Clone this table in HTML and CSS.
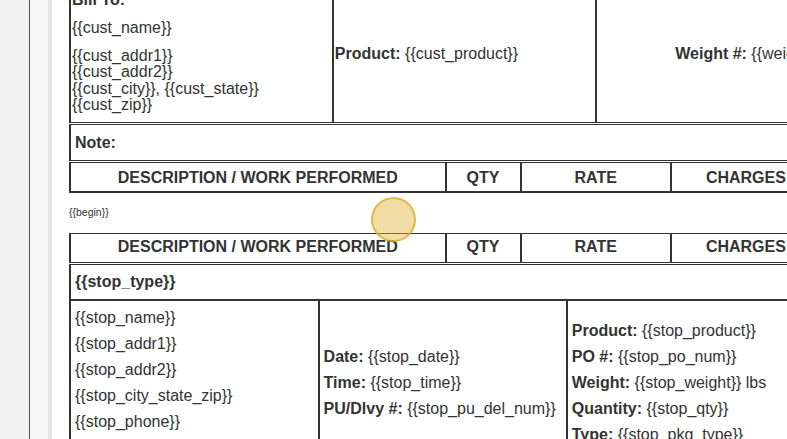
FILE: index.html
```html
<!DOCTYPE html>
<html>
<head>
<meta charset="utf-8">
<link rel="stylesheet" href="styles.css">
</head>
<body>
<div class="app">
  <div class="gutter"></div>
  <div class="rule"></div>
  <div class="margin"></div>
  <div class="edge"></div>
  <div class="page">
    <div class="sheet">
      <table class="tbl t-bill">
        <colgroup><col class="c35"><col class="c35"><col class="c30"></colgroup>
        <tr>
          <td class="bill">
            <b class="lbl-line">Bill To:</b>
            <p class="name">{{cust_name}}</p>
            <p class="addr">{{cust_addr1}}<br>{{cust_addr2}}<br>{{cust_city}}, {{cust_state}}<br>{{cust_zip}}</p>
          </td>
          <td class="mid"><b>Product:</b> {{cust_product}}</td>
          <td class="mid right"><b>Weight #:</b> {{weight}}</td>
        </tr>
      </table>
      <table class="tbl t-note">
        <tr><td class="note"><b>Note:</b></td></tr>
      </table>
      <table class="tbl t-head t-head1">
        <colgroup><col class="c50"><col class="c10"><col class="c20"><col class="c20"></colgroup>
        <tr><th>DESCRIPTION / WORK PERFORMED</th><th>QTY</th><th>RATE</th><th>CHARGES</th></tr>
      </table>
      <div class="begin">{{begin}}</div>
      <table class="tbl t-head t-head2">
        <colgroup><col class="c50"><col class="c10"><col class="c20"><col class="c20"></colgroup>
        <tr><th>DESCRIPTION / WORK PERFORMED</th><th>QTY</th><th>RATE</th><th>CHARGES</th></tr>
      </table>
      <table class="tbl t-stop">
        <colgroup><col class="s1"><col class="s2"><col class="s3"></colgroup>
        <tr><td class="stype" colspan="3"><b>{{stop_type}}</b></td></tr>
        <tr class="srow">
          <td class="scol">
            <div class="item">{{stop_name}}</div>
            <div class="item">{{stop_addr1}}</div>
            <div class="item">{{stop_addr2}}</div>
            <div class="item">{{stop_city_state_zip}}</div>
            <div class="item">{{stop_phone}}</div>
            <div class="item">{{stop_contact}}</div>
          </td>
          <td class="scol">
            <div class="item"><b>Date:</b> {{stop_date}}</div>
            <div class="item"><b>Time:</b> {{stop_time}}</div>
            <div class="item"><b>PU/Dlvy #:</b> {{stop_pu_del_num}}</div>
          </td>
          <td class="scol">
            <div class="item"><b>Product:</b> {{stop_product}}</div>
            <div class="item"><b>PO #:</b> {{stop_po_num}}</div>
            <div class="item"><b>Weight:</b> {{stop_weight}} lbs</div>
            <div class="item"><b>Quantity:</b> {{stop_qty}}</div>
            <div class="item"><b>Type:</b> {{stop_pkg_type}}</div>
          </td>
        </tr>
      </table>
    </div>
  </div>
</div>
<div class="cursor"></div>
</body>
</html>
```
FILE: styles.css
```css
html, body {
  margin: 0;
  padding: 0;
  height: 100%;
  overflow: hidden;
  background: #ffffff;
}
body {
  font-family: "Liberation Sans", Arial, sans-serif;
  font-size: 16px;
  color: #333333;
}
.app {
  display: flex;
  height: 439px;
  overflow: hidden;
}
.gutter {
  width: 29px;
  flex: none;
  background: #f2f2f3;
}
.rule {
  width: 1px;
  flex: none;
  background: #505050;
}
.margin {
  width: 18px;
  flex: none;
  background: #f6f6f6;
}
.edge {
  width: 4px;
  flex: none;
  background: #e4e4e4;
}
.page {
  flex: 1;
  background: #ffffff;
  overflow: hidden;
  padding-left: 17px;
}
.sheet {
  width: 753px;
  margin-top: -17px;
}
.tbl {
  width: 753px;
  border-collapse: collapse;
  table-layout: fixed;
}
.tbl td, .tbl th {
  border: 2px solid #333333;
  padding: 0;
}
.c35 { width: 35%; }
.c30 { width: 30%; }
.c50 { width: 50%; }
.c10 { width: 10%; }
.c20 { width: 20%; }
.s1 { width: 33.1%; }
.s2 { width: 33.05%; }
.s3 { width: 33.85%; }

/* bill table */
.t-bill td {
  border-bottom: 3px double #333333;
}
.tbl td.bill {
  padding: 6px 1px 9px 1px;
  vertical-align: top;
}
.lbl-line {
  display: block;
  line-height: 18px;
}
.bill p {
  margin: 0;
}
.name {
  line-height: 18px;
  padding-top: 10px;
}
.addr {
  line-height: 16.3px;
  padding-top: 11px;
}
.tbl td.mid {
  vertical-align: middle;
  padding: 0 1px;
  line-height: 18px;
}
.right {
  text-align: right;
}

/* note */
.t-note td {
  border-top: none;
  border-bottom: 3px double #333333;
}
.tbl td.note {
  padding: 9px 4px 8px 4px;
  line-height: 18px;
}

/* headers */
.tbl.t-head th {
  font-weight: bold;
  text-align: center;
  line-height: 18px;
  white-space: nowrap;
}
.tbl.t-head1 th {
  border-top: none;
  border-bottom: 2px solid #333333;
  padding: 6px 2px 4px 2px;
}
.tbl.t-head2 th {
  border-top: 1px solid #333333;
  border-bottom: 3px double #333333;
  padding: 4px 2px 6px 2px;
}

.begin {
  font-size: 10.5px;
  line-height: 12px;
  padding: 13px 0 15px 0;
}

/* stop */
.tbl td.stype {
  border-top: none;
  padding: 8px 4px 8px 4px;
  line-height: 18px;
}
.tbl td.scol {
  vertical-align: middle;
  padding: 8px 4px 6px 4px;
}
.item {
  line-height: 18px;
  margin-bottom: 8px;
  white-space: nowrap;
}
.item:last-child {
  margin-bottom: 0;
}

.cursor {
  position: absolute;
  left: 371px;
  top: 197px;
  width: 41px;
  height: 41px;
  border-radius: 50%;
  background: rgba(225, 180, 55, 0.45);
  border: 2px solid rgba(220, 172, 45, 0.75);
}
```
